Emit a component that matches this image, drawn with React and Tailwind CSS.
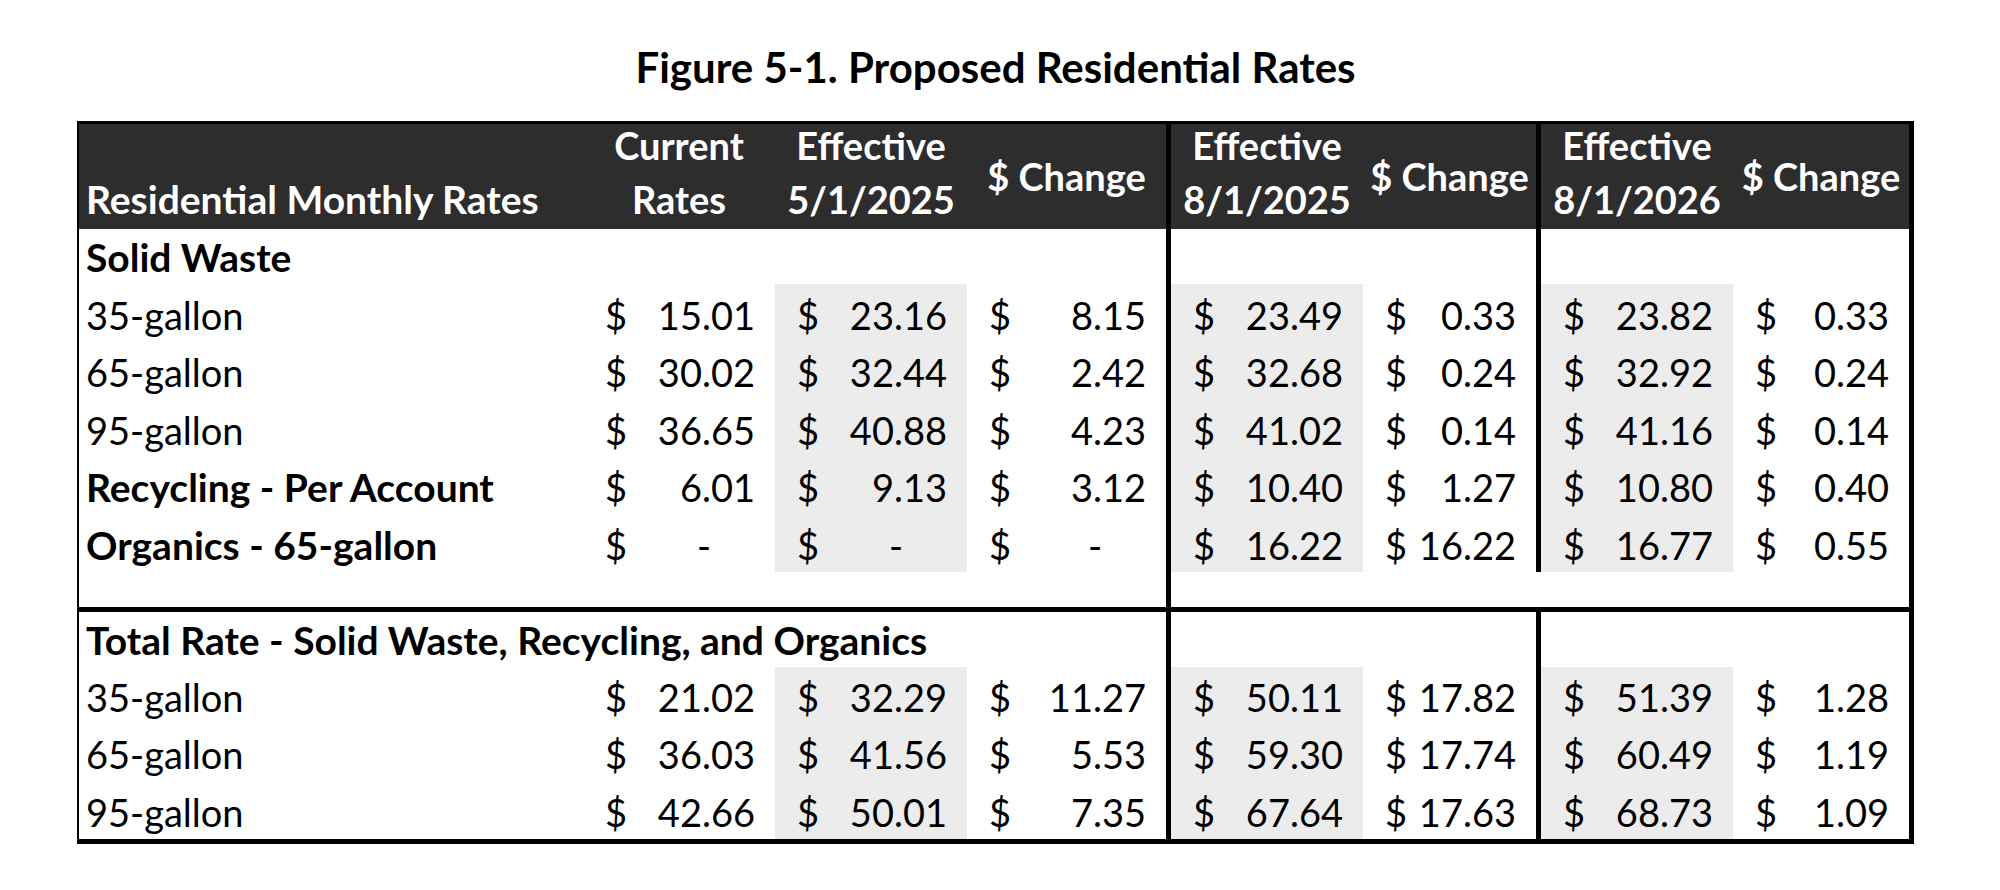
import React from "react";

const COLS = "grid grid-cols-[504px_192px_192px_199px_197px_173px_197px_176px]";

const solidWaste = [
  { label: "35-gallon", h: "h-[58px]", values: ["15.01", "23.16", "8.15", "23.49", "0.33", "23.82", "0.33"] },
  { label: "65-gallon", h: "h-[57px]", values: ["30.02", "32.44", "2.42", "32.68", "0.24", "32.92", "0.24"] },
  { label: "95-gallon", h: "h-[58px]", values: ["36.65", "40.88", "4.23", "41.02", "0.14", "41.16", "0.14"] },
  { label: "Recycling - Per Account", bold: true, h: "h-[57px]", values: ["6.01", "9.13", "3.12", "10.40", "1.27", "10.80", "0.40"] },
  { label: "Organics - 65-gallon", bold: true, h: "h-[58px]", values: ["-", "-", "-", "16.22", "16.22", "16.77", "0.55"] },
];

const totals = [
  { label: "35-gallon", h: "h-[57px]", values: ["21.02", "32.29", "11.27", "50.11", "17.82", "51.39", "1.28"] },
  { label: "65-gallon", h: "h-[57px]", values: ["36.03", "41.56", "5.53", "59.30", "17.74", "60.49", "1.19"] },
  { label: "95-gallon", h: "h-[58px]", values: ["42.66", "50.01", "7.35", "67.64", "17.63", "68.73", "1.09"] },
];

// which numeric columns are shaded / have the heavy left rule
const shaded = [false, true, false, true, false, true, false];
const ruled = [false, false, false, true, false, true, false];

function NumCell({ value, index }) {
  const bg = shaded[index] ? "bg-[#ececec]" : "";
  const rule = ruled[index] ? "border-l-[5px] border-black" : "";
  const pr = value === "-" ? "pr-[64px]" : "pr-[20px]";
  return (
    <div className={`flex items-end justify-between pl-[22px] pb-[8px] ${pr} ${bg} ${rule}`}>
      <span>$</span>
      <span>{value}</span>
    </div>
  );
}

function DataRow({ row }) {
  return (
    <div className={`${COLS} ${row.h} text-[38px] leading-[38px]`}>
      <div className={`flex items-end pl-[7px] pb-[8px] whitespace-nowrap ${row.bold ? "font-bold text-[39px]" : ""}`}>
        {row.label}
      </div>
      {row.values.map((v, i) => (
        <NumCell key={i} value={v} index={i} />
      ))}
    </div>
  );
}

function LabelRow({ label }) {
  return (
    <div className={`${COLS} h-[55px] text-[39px] leading-[38px]`}>
      <div className="relative z-10 flex items-end pl-[7px] pb-[8px] whitespace-nowrap font-bold">{label}</div>
      <div></div>
      <div></div>
      <div></div>
      <div className="border-l-[5px] border-black"></div>
      <div></div>
      <div className="border-l-[5px] border-black"></div>
      <div></div>
    </div>
  );
}

function TwoLine({ top, bottom, rule }) {
  return (
    <div className={`flex flex-col items-center justify-end pb-[3px] ${rule ? "border-l-[5px] border-black" : ""}`}>
      <div>{top}</div>
      <div>{bottom}</div>
    </div>
  );
}

function ChangeHead() {
  return <div className="flex items-center justify-center pb-[2px] whitespace-nowrap">$ Change</div>;
}

export default function App() {
  return (
    <div className="min-h-screen bg-white text-black font-[Lato,sans-serif] pt-[47px] pl-[77px]">
      <div className="w-[1837px]">
        <h1 className="text-center text-[42px] leading-[40px] font-bold mb-[34px]">
          Figure 5-1. Proposed Residential Rates
        </h1>

        <div className="border-l-2 border-t-[3px] border-r-[5px] border-b-[5px] border-black">
          {/* Header */}
          <div className={`${COLS} grid-rows-[105px] h-[105px] bg-[#2d2d2d] text-white font-bold text-[38px] leading-[54px]`}>
            <div className="flex items-end pl-[7px] pb-[3px] whitespace-nowrap text-[39px]">Residential Monthly Rates</div>
            <TwoLine top="Current" bottom="Rates" />
            <TwoLine top="Effective" bottom="5/1/2025" />
            <ChangeHead />
            <TwoLine top="Effective" bottom="8/1/2025" rule />
            <ChangeHead />
            <TwoLine top="Effective" bottom="8/1/2026" rule />
            <ChangeHead />
          </div>

          {/* Solid waste section */}
          <LabelRow label="Solid Waste" />
          {solidWaste.map((row) => (
            <DataRow key={row.label} row={row} />
          ))}

          {/* spacer row */}
          <div className={`${COLS} h-[35px]`}>
            <div></div>
            <div></div>
            <div></div>
            <div></div>
            <div className="border-l-[5px] border-black"></div>
            <div></div>
            <div></div>
            <div></div>
          </div>

          <div className="h-[5px] bg-black"></div>

          {/* Totals section */}
          <LabelRow label="Total Rate - Solid Waste, Recycling, and Organics" />
          {totals.map((row) => (
            <DataRow key={row.label} row={row} />
          ))}
        </div>
      </div>
    </div>
  );
}
